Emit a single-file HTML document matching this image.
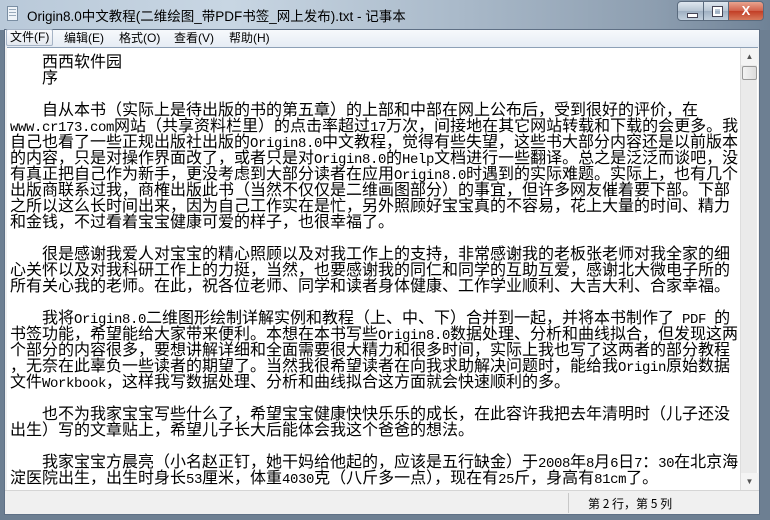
<!DOCTYPE html>
<html><head><meta charset="utf-8"><style>
*{margin:0;padding:0;box-sizing:border-box}
body{width:770px;height:520px;overflow:hidden;background:#6d7f92;font-family:"Liberation Sans","Noto Sans CJK SC",sans-serif;position:relative}
.title{position:absolute;left:0;top:0;width:770px;height:30px;background:linear-gradient(90deg,#b9c9d9 0%,#c8d6e3 30%,#a9b9c9 60%,#8d9eb0 85%,#6f8296 100%)}
.title .t{position:absolute;left:27px;top:5px;font-size:13.5px;color:#000;white-space:nowrap}
.icon{position:absolute;left:7px;top:6px;width:11px;height:15px;background:#eef3f8;border:1px solid #7a8ea3}
.icon:before{content:"";position:absolute;left:1px;top:2px;width:7px;height:8px;background:repeating-linear-gradient(#9ab 0 1px,transparent 1px 3px)}
.btn{position:absolute;top:1px;height:20px;border:1px solid #5a6b7e;background:linear-gradient(#dfe7ef,#b6c4d2 50%,#9fb0c2 51%,#c2d0dd);border-radius:3px}
.min{left:677px;width:27px;border-radius:4px 0 0 4px}
.max{left:703px;width:26px;border-radius:0}
.cls{left:728px;width:36px;background:linear-gradient(#e8a48f,#d0604a 50%,#c23e26 51%,#d87a5c);border-radius:0 4px 4px 0;color:#fff;font-weight:bold;font-size:13px;text-align:center;line-height:18px}
.min:after{content:"";position:absolute;left:9px;top:11px;width:9px;height:3px;background:#fff;border:1px solid #445}
.max:after{content:"";position:absolute;left:8px;top:4px;width:9px;height:9px;border:1px solid #445;box-shadow:inset 0 0 0 2px #fff}
.frame{position:absolute;left:4px;top:29px;width:756px;height:486px;background:#f0f0f0;border:1px solid #5f7085}
.menu{position:absolute;left:5px;top:30px;width:754px;height:17px;background:linear-gradient(#f7f9fc,#e6ecf4);font-size:12px;line-height:15px;color:#000}
.menu span{position:absolute;top:1px}
.menu .sel{border:1px solid #a6b4c6;background:linear-gradient(#fafbfd,#e3e8ef);border-radius:2px;height:17px;top:-1px;padding:0 3px}
.edit{position:absolute;left:7px;top:47px;width:751px;height:443px;background:#fff;border-top:1px solid #8da0b6;overflow:hidden}
.txt{position:absolute;left:3px;top:4px;font-family:"Noto Sans CJK SC","WenQuanYi Zen Hei",sans-serif;font-size:16px;color:#000}
.txt div{height:16px;line-height:16px;white-space:pre}
.m{font-family:"Liberation Mono",monospace;font-size:14px;letter-spacing:-0.4px}
.sb{position:absolute;left:740px;top:48px;width:17px;height:442px;background:#eaeaea;border-left:1px solid #ddd}
.sb .a{position:absolute;left:0;width:17px;height:17px;background:#f4f4f4;font-size:8px;color:#555;text-align:center;line-height:17px}
.sb .th{position:absolute;left:1px;top:18px;width:15px;height:14px;border:1px solid #999;border-radius:2px;background:linear-gradient(90deg,#f3f3f3,#dcdcdc)}
.status{position:absolute;left:5px;top:490px;width:754px;height:24px;background:#f0f0f0;border-top:1px solid #d5d5d5;font-size:12px}
.status .sep{position:absolute;left:563px;top:2px;width:1px;height:20px;background:#c8c8c8}
.status .s{position:absolute;left:583px;top:4px;font-family:"Noto Sans CJK SC",sans-serif;font-size:12px}
</style></head><body>
<div class="title"><div class="icon"></div><div class="t">Origin8.0中文教程(二维绘图_带PDF书签_网上发布).txt - 记事本</div>
<div class="btn min"></div><div class="btn max"></div><div class="btn cls">X</div></div>
<div class="frame"></div>
<div class="menu"><span class="sel" style="left:1px">文件(F)</span><span style="left:59px">编辑(E)</span><span style="left:114px">格式(O)</span><span style="left:169px">查看(V)</span><span style="left:224px">帮助(H)</span></div>
<div class="edit"><div class="txt">
<div>　　西西软件园</div>
<div>　　序</div>
<div> </div>
<div>　　自从本书（实际上是待出版的书的第五章）的上部和中部在网上公布后，受到很好的评价，在</div>
<div><span class="m">www.cr173.com</span>网站（共享资料栏里）的点击率超过<span class="m">17</span>万次，间接地在其它网站转载和下载的会更多。我</div>
<div>自己也看了一些正规出版社出版的<span class="m">Origin8.0</span>中文教程，觉得有些失望，这些书大部分内容还是以前版本</div>
<div>的内容，只是对操作界面改了，或者只是对<span class="m">Origin8.0</span>的<span class="m">Help</span>文档进行一些翻译。总之是泛泛而谈吧，没</div>
<div>有真正把自己作为新手，更没考虑到大部分读者在应用<span class="m">Origin8.0</span>时遇到的实际难题。实际上，也有几个</div>
<div>出版商联系过我，商榷出版此书（当然不仅仅是二维画图部分）的事宜，但许多网友催着要下部。下部</div>
<div>之所以这么长时间出来，因为自己工作实在是忙，另外照顾好宝宝真的不容易，花上大量的时间、精力</div>
<div>和金钱，不过看着宝宝健康可爱的样子，也很幸福了。</div>
<div> </div>
<div>　　很是感谢我爱人对宝宝的精心照顾以及对我工作上的支持，非常感谢我的老板张老师对我全家的细</div>
<div>心关怀以及对我科研工作上的力挺，当然，也要感谢我的同仁和同学的互助互爱，感谢北大微电子所的</div>
<div>所有关心我的老师。在此，祝各位老师、同学和读者身体健康、工作学业顺利、大吉大利、合家幸福。</div>
<div> </div>
<div>　　我将<span class="m">Origin8.0</span>二维图形绘制详解实例和教程（上、中、下）合并到一起，并将本书制作了<span class="m"> PDF </span>的</div>
<div>书签功能，希望能给大家带来便利。本想在本书写些<span class="m">Origin8.0</span>数据处理、分析和曲线拟合，但发现这两</div>
<div>个部分的内容很多，要想讲解详细和全面需要很大精力和很多时间，实际上我也写了这两者的部分教程</div>
<div>，无奈在此辜负一些读者的期望了。当然我很希望读者在向我求助解决问题时，能给我<span class="m">Origin</span>原始数据</div>
<div>文件<span class="m">Workbook</span>，这样我写数据处理、分析和曲线拟合这方面就会快速顺利的多。</div>
<div> </div>
<div>　　也不为我家宝宝写些什么了，希望宝宝健康快快乐乐的成长，在此容许我把去年清明时（儿子还没</div>
<div>出生）写的文章贴上，希望儿子长大后能体会我这个爸爸的想法。</div>
<div> </div>
<div>　　我家宝宝方晨亮（小名赵正钉，她干妈给他起的，应该是五行缺金）于<span class="m">2008</span>年<span class="m">8</span>月<span class="m">6</span>日<span class="m">7</span>：<span class="m">30</span>在北京海</div>
<div>淀医院出生，出生时身长<span class="m">53</span>厘米，体重<span class="m">4030</span>克（八斤多一点），现在有<span class="m">25</span>斤，身高有<span class="m">81cm</span>了。</div>
</div></div>
<div class="sb"><div class="a" style="top:0">▲</div><div class="th"></div><div class="a" style="bottom:0">▼</div></div>
<div class="status"><div class="sep"></div><div class="s">第 2 行，第 5 列</div></div>
</body></html>
